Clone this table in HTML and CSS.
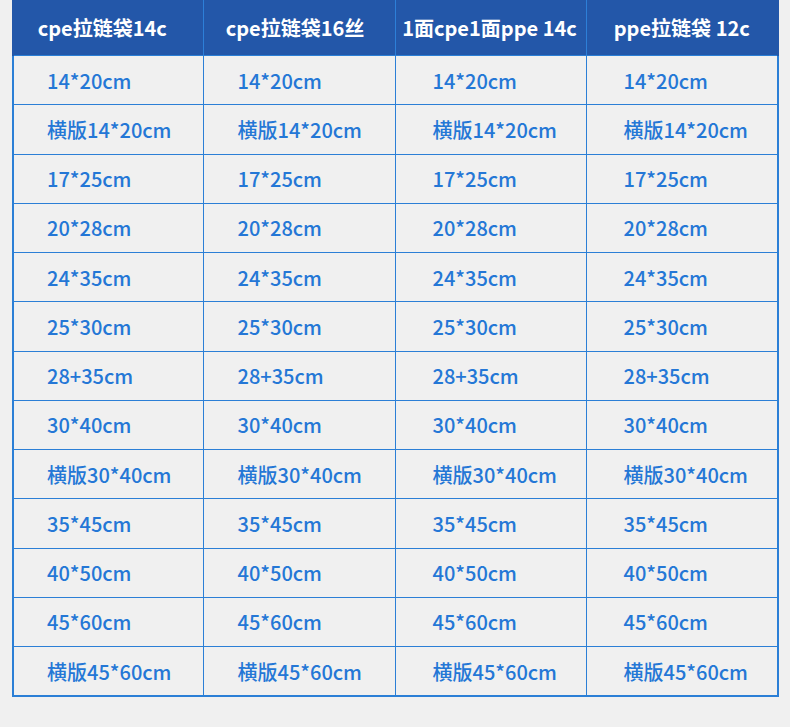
FILE: index.html
```html
<!DOCTYPE html>
<html lang="zh">
<head>
<meta charset="utf-8">
<link rel="stylesheet" href="styles.css">
</head>
<body>
<table class="sizes">
  <colgroup>
    <col class="c1"><col class="c2"><col class="c3"><col class="c4">
  </colgroup>
  <thead>
    <tr><th>cpe拉链袋14c</th><th>cpe拉链袋16丝</th><th>1面cpe1面ppe 14c</th><th>ppe拉链袋 12c</th></tr>
  </thead>
  <tbody>
    <tr><td>14*20cm</td><td>14*20cm</td><td>14*20cm</td><td>14*20cm</td></tr>
    <tr><td>横版14*20cm</td><td>横版14*20cm</td><td>横版14*20cm</td><td>横版14*20cm</td></tr>
    <tr><td>17*25cm</td><td>17*25cm</td><td>17*25cm</td><td>17*25cm</td></tr>
    <tr><td>20*28cm</td><td>20*28cm</td><td>20*28cm</td><td>20*28cm</td></tr>
    <tr><td>24*35cm</td><td>24*35cm</td><td>24*35cm</td><td>24*35cm</td></tr>
    <tr><td>25*30cm</td><td>25*30cm</td><td>25*30cm</td><td>25*30cm</td></tr>
    <tr><td>28+35cm</td><td>28+35cm</td><td>28+35cm</td><td>28+35cm</td></tr>
    <tr><td>30*40cm</td><td>30*40cm</td><td>30*40cm</td><td>30*40cm</td></tr>
    <tr><td>横版30*40cm</td><td>横版30*40cm</td><td>横版30*40cm</td><td>横版30*40cm</td></tr>
    <tr><td>35*45cm</td><td>35*45cm</td><td>35*45cm</td><td>35*45cm</td></tr>
    <tr><td>40*50cm</td><td>40*50cm</td><td>40*50cm</td><td>40*50cm</td></tr>
    <tr><td>45*60cm</td><td>45*60cm</td><td>45*60cm</td><td>45*60cm</td></tr>
    <tr><td>横版45*60cm</td><td>横版45*60cm</td><td>横版45*60cm</td><td>横版45*60cm</td></tr>
  </tbody>
</table>
</body>
</html>
```
FILE: styles.css
```css
html, body {
  margin: 0;
  padding: 0;
  background: #f0f0f0;
}
body {
  padding: 0 0 0 12px;
  font-family: "Noto Sans CJK SC", "Noto Sans", sans-serif;
}
.sizes {
  border-collapse: collapse;
  table-layout: fixed;
  width: 765px;
  border-left: 2px solid #2b7fd6;
  border-right: 2px solid #2b7fd6;
  border-bottom: 2px solid #2b7fd6;
}
.c1 { width: 190px; }
.c2 { width: 192px; }
.c3 { width: 191px; }
.c4 { width: 192px; }
.sizes th {
  background: #2357a9;
  color: #ffffff;
  font-weight: 700;
  font-size: 20px;
  height: 55px;
  padding: 0;
  text-align: center;
  border-left: 1px solid #2d7fd8;
  border-right: 1px solid #2d7fd8;
  white-space: nowrap;
}
.sizes th:nth-child(1) { padding-right: 12px; }
.sizes th:nth-child(2) { padding-right: 8px; }
.sizes th:nth-child(3) { padding-right: 2px; }
.sizes th:first-child { border-left: 2px solid #2357a9; }
.sizes th:last-child { border-right: 2px solid #2357a9; }
.sizes td {
  height: 48.25px;
  padding: 0 0 0 33px;
  border: 1px solid #2b7fd6;
  color: #2477d6;
  font-weight: 500;
  font-size: 20px;
  text-align: left;
  white-space: nowrap;
}
.sizes td:nth-child(2) { padding-left: 34px; }
.sizes td:nth-child(3) { padding-left: 37px; }
.sizes td:nth-child(4) { padding-left: 37px; }
.sizes td:first-child { border-left: 2px solid #2b7fd6; }
.sizes td:last-child { border-right: 2px solid #2b7fd6; }
.sizes tbody tr:last-child td { border-bottom: 2px solid #2b7fd6; }
```
